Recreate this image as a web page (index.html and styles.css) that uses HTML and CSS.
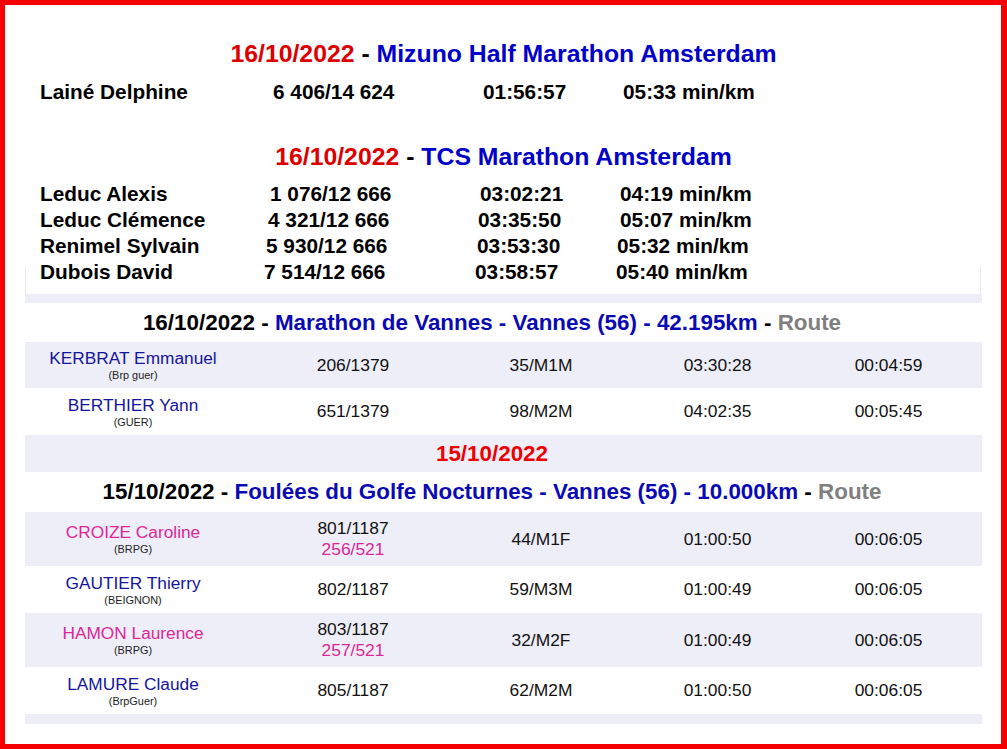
FILE: index.html
```html
<!DOCTYPE html>
<html lang="fr">
<head>
<meta charset="utf-8">
<title>Résultats</title>
<link rel="stylesheet" href="styles.css">
</head>
<body>
<div class="frame">
  <section class="intro">
    <h2 class="intro-title intro-title--first"><span class="date">16/10/2022</span> - <span class="race">Mizuno Half Marathon Amsterdam</span></h2>
    <div class="intro-row intro-row--first"><span>Lainé Delphine</span><span>6 406/14 624</span><span>01:56:57</span><span>05:33 min/km</span></div>

    <h2 class="intro-title intro-title--second"><span class="date">16/10/2022</span> - <span class="race">TCS Marathon Amsterdam</span></h2>
    <div class="intro-list">
      <div class="intro-row"><span>Leduc Alexis</span><span>1 076/12 666</span><span>03:02:21</span><span>04:19 min/km</span></div>
      <div class="intro-row intro-row--d1"><span>Leduc Clémence</span><span>4 321/12 666</span><span>03:35:50</span><span>05:07 min/km</span></div>
      <div class="intro-row intro-row--d2"><span>Renimel Sylvain</span><span>5 930/12 666</span><span>03:53:30</span><span>05:32 min/km</span></div>
      <div class="intro-row intro-row--d3"><span>Dubois David</span><span>7 514/12 666</span><span>03:58:57</span><span>05:40 min/km</span></div>
    </div>
  </section>

  <section class="results">
    <div class="band"></div>

    <div class="row row--title"><div class="race-title">16/10/2022 - <span class="race-name">Marathon de Vannes - Vannes (56) - 42.195km</span> - <span class="race-type">Route</span></div></div>

    <div class="row row--alt">
      <div class="athlete"><span class="name m">KERBRAT Emmanuel</span><span class="club">(Brp guer)</span></div>
      <div class="cell">206/1379</div><div class="cell">35/M1M</div><div class="cell">03:30:28</div><div class="cell">00:04:59</div>
    </div>
    <div class="row">
      <div class="athlete"><span class="name m">BERTHIER Yann</span><span class="club">(GUER)</span></div>
      <div class="cell">651/1379</div><div class="cell">98/M2M</div><div class="cell">04:02:35</div><div class="cell">00:05:45</div>
    </div>

    <div class="row row--alt row--date"><div class="day">15/10/2022</div></div>

    <div class="row row--title row--title2"><div class="race-title">15/10/2022 - <span class="race-name">Foulées du Golfe Nocturnes - Vannes (56) - 10.000km</span> - <span class="race-type">Route</span></div></div>

    <div class="row row--alt row--tall">
      <div class="athlete"><span class="name f">CROIZE Caroline</span><span class="club">(BRPG)</span></div>
      <div class="cell cell--stack"><span>801/1187</span><span class="f">256/521</span></div><div class="cell">44/M1F</div><div class="cell">01:00:50</div><div class="cell">00:06:05</div>
    </div>
    <div class="row">
      <div class="athlete"><span class="name m">GAUTIER Thierry</span><span class="club">(BEIGNON)</span></div>
      <div class="cell">802/1187</div><div class="cell">59/M3M</div><div class="cell">01:00:49</div><div class="cell">00:06:05</div>
    </div>
    <div class="row row--alt row--tall">
      <div class="athlete"><span class="name f">HAMON Laurence</span><span class="club">(BRPG)</span></div>
      <div class="cell cell--stack"><span>803/1187</span><span class="f">257/521</span></div><div class="cell">32/M2F</div><div class="cell">01:00:49</div><div class="cell">00:06:05</div>
    </div>
    <div class="row">
      <div class="athlete"><span class="name m">LAMURE Claude</span><span class="club">(BrpGuer)</span></div>
      <div class="cell">805/1187</div><div class="cell">62/M2M</div><div class="cell">01:00:50</div><div class="cell">00:06:05</div>
    </div>

    <div class="band band--end"></div>
  </section>
</div>
</body>
</html>
```

FILE: styles.css
```css
html, body {
  margin: 0;
  padding: 0;
  background: #fff;
}

body {
  font-family: "Liberation Sans", Arial, sans-serif;
  color: #111;
}

.frame {
  box-sizing: border-box;
  width: 1007px;
  height: 749px;
  border: 5px solid #f40000;
  border-right-width: 6px;
  padding: 0 19px 0 20px;
  background: #fff;
}

/* ---------- intro (Amsterdam) ---------- */
.intro {
  height: 289px;
  display: flex;
  flex-direction: column;
  position: relative;
}

.intro::after {
  content: "";
  position: absolute;
  left: 0;
  right: 1px;
  top: 262px;
  bottom: 0;
  border-left: 1px solid #e8e8ef;
  border-right: 1px solid #e8e8ef;
}

.intro-title {
  margin: 0;
  text-align: center;
  font-size: 24.8px;
  line-height: 30px;
  font-weight: bold;
  color: #000;
  padding-right: 0;
}

.intro-title--first { margin-top: 34px; }
.intro-title--second { margin-top: 37px; }

.date { color: #dd0000; }
.race { color: #0000c8; }

.intro-row {
  display: grid;
  grid-template-columns: 230px 210px 140px auto;
  padding-left: 15px;
  font-size: 20.8px;
  line-height: 26px;
  font-weight: bold;
  color: #000;
}

.intro-row--first {
  margin-top: 10px;
  grid-template-columns: 233px 210px 140px auto;
}

.intro-row--d1 { grid-template-columns: 228px 210px 142px auto; }
.intro-row--d2 { grid-template-columns: 226px 211px 140px auto; }
.intro-row--d3 { grid-template-columns: 224px 211px 141px auto; }

.intro-list {
  margin-top: 9px;
}

/* ---------- results table ---------- */
.results {
  display: flex;
  flex-direction: column;
}

.band {
  height: 9px;
  background: #eeeef9;
}

.band--end { height: 10px; }

.row {
  display: grid;
  grid-template-columns: 216px 224px 152px 201px 141px 1fr;
  align-items: center;
  height: 47px;
  background: #fff;
}

.row--alt { background: #eeeef9; }
.row--alt:not(.row--tall):not(.row--date) { height: 46px; }
.row--tall { height: 54px; }

.row--title { height: 39px; }
.row--title2 { height: 40px; }
.row--date { height: 37px; }

.race-title,
.day {
  grid-column: 1 / 6;
  text-align: center;
  font-weight: bold;
  font-size: 22.4px;
  line-height: 26px;
  color: #000;
}

.race-name { color: #0a0ab4; }
.race-type { color: #808080; }

.day { color: #ee0000; }

.athlete {
  display: flex;
  flex-direction: column;
  align-items: center;
  text-align: center;
}

.name {
  font-size: 17.3px;
  line-height: 20px;
}

.m { color: #14149c; }
.f { color: #dc2696; }

.club {
  font-size: 10.9px;
  line-height: 13px;
  color: #222;
  margin-top: 1px;
}

.cell {
  text-align: center;
  font-size: 17.4px;
  line-height: 21px;
  color: #111;
}

.cell--stack {
  display: flex;
  flex-direction: column;
  align-items: center;
}
```
